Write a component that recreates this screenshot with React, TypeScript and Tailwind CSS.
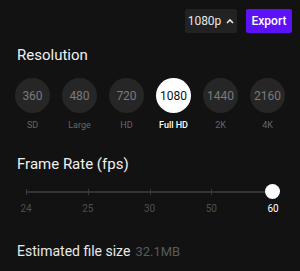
import React from "react";

const res = [
  { v: "360", l: "SD" },
  { v: "480", l: "Large" },
  { v: "720", l: "HD" },
  { v: "1080", l: "Full HD", sel: true },
  { v: "1440", l: "2K" },
  { v: "2160", l: "4K" },
];
const fps = ["24", "25", "30", "50", "60"];

export default function App() {
  return (
    <div
      className="w-[300px] h-[271px] bg-[#121212] text-white overflow-hidden"
      style={{ fontFamily: "Roboto, 'Noto Sans', sans-serif" }}
    >
      <div className="flex justify-end items-center gap-[9px] pt-[9px] pr-[8px]">
        <div className="h-[24px] w-[52px] bg-[#222222] rounded-[2px] flex items-center justify-center gap-[5px] text-[12px] text-[#e6e6e6]">
          <span>1080p</span>
          <svg width="8" height="6" viewBox="0 0 8 6" fill="none">
            <path d="M1 5 L4 2 L7 5" stroke="#e6e6e6" strokeWidth="1.6" />
          </svg>
        </div>
        <div className="h-[24px] w-[46px] bg-[#5b12f5] rounded-[2px] flex items-center justify-center text-[12px] font-medium text-white">
          Export
        </div>
      </div>

      <div className="px-[17px] mt-[12px] text-[15px] leading-[20px] text-[#f0f0f0]">Resolution</div>

      <div className="flex justify-between px-[15px] mt-[13px]">
        {res.map((r) => (
          <div key={r.v} className="flex flex-col items-center w-[35px]">
            <div
              className={
                r.sel
                  ? "w-[35px] h-[35px] rounded-full bg-white text-[#111] flex items-center justify-center text-[12px]"
                  : "w-[35px] h-[35px] rounded-full bg-[#262626] text-[#7a7a7a] flex items-center justify-center text-[12px]"
              }
            >
              {r.v}
            </div>
            <div
              className={
                r.sel
                  ? "mt-[6px] text-[9px] leading-[12px] text-white font-medium whitespace-nowrap"
                  : "mt-[6px] text-[9px] leading-[12px] text-[#666] whitespace-nowrap"
              }
            >
              {r.l}
            </div>
          </div>
        ))}
      </div>

      <div className="px-[17px] mt-[23px] text-[15px] leading-[20px] text-[#f0f0f0]">Frame Rate (fps)</div>

      <div className="relative mx-[26px] w-[247px] mt-[10px] h-[16px]">
        <div className="absolute left-0 right-0 top-[7px] h-[2px] bg-[#333333]" />
        {fps.map((f, i) => (
          <div
            key={f}
            className="absolute top-[5px] w-[1px] h-[6px] bg-[#3a3a3a]"
            style={{ left: `${(i * 247) / 4}px` }}
          />
        ))}
        <div className="absolute right-[-7px] top-[0px] w-[15px] h-[15px] rounded-full bg-white" />
      </div>
      <div className="relative mx-[26px] w-[247px] h-[14px] mt-[2px]">
        {fps.map((f, i) => (
          <div
            key={f}
            className={
              i === 4
                ? "absolute -translate-x-1/2 text-[10px] leading-[14px] text-white"
                : "absolute -translate-x-1/2 text-[10px] leading-[14px] text-[#4f4f4f]"
            }
            style={{ left: `${(i * 247) / 4}px` }}
          >
            {f}
          </div>
        ))}
      </div>

      <div className="px-[17px] mt-[26px] flex items-baseline gap-[5px]">
        <span className="text-[14px] leading-[18px] text-[#e8e8e8]">Estimated file size</span>
        <span className="text-[13px] leading-[18px] text-[#5a5a5a]">32.1MB</span>
      </div>
    </div>
  );
}
